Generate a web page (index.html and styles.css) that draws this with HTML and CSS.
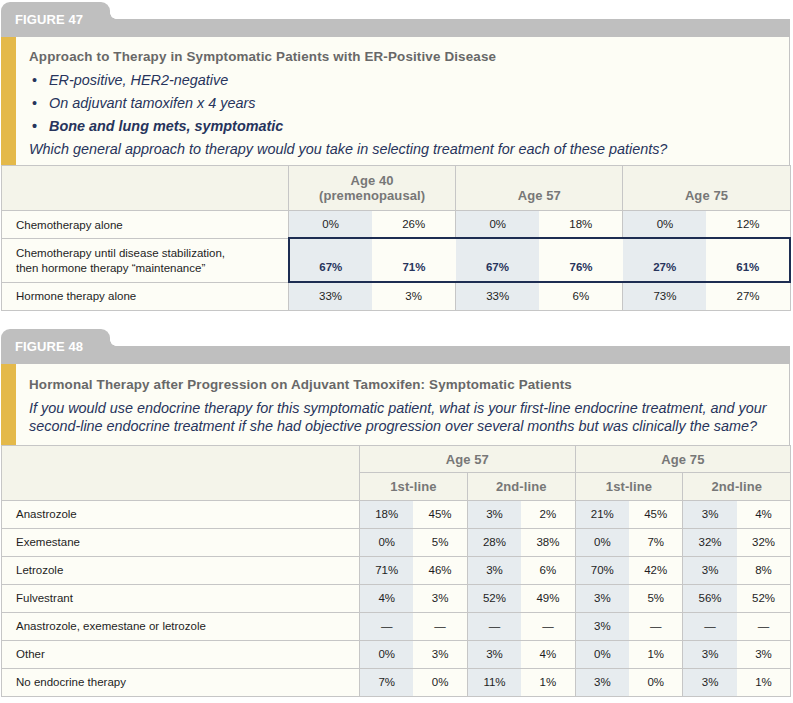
FILE: index.html
```html
<!DOCTYPE html>
<html>
<head>
<meta charset="utf-8">
<link rel="stylesheet" href="styles.css">
</head>
<body>
<div class="page">
  <section class="figure">
    <div class="fig-head"><div class="tab">FIGURE 47</div><div class="bar"></div></div>
    <div class="intro">
      <p class="title">Approach to Therapy in Symptomatic Patients with ER-Positive Disease</p>
      <ul class="bullets">
        <li>ER-positive, HER2-negative</li>
        <li>On adjuvant tamoxifen x 4 years</li>
        <li class="strong">Bone and lung mets, symptomatic</li>
      </ul>
      <p class="question">Which general approach to therapy would you take in selecting treatment for each of these patients?</p>
    </div>
    <table class="data t47">
      <colgroup>
        <col class="c-label47">
        <col class="c-sub47"><col class="c-sub47"><col class="c-sub47"><col class="c-sub47"><col class="c-sub47"><col class="c-sub47">
      </colgroup>
      <thead>
        <tr class="hrow47">
          <th class="label"></th>
          <th colspan="2" class="g">Age 40<br>(premenopausal)</th>
          <th colspan="2" class="g">Age 57</th>
          <th colspan="2" class="g last">Age 75</th>
        </tr>
      </thead>
      <tbody>
        <tr class="r1">
          <td class="label">Chemotherapy alone</td>
          <td class="s g">0%</td><td>26%</td>
          <td class="s g">0%</td><td>18%</td>
          <td class="s g">0%</td><td class="last">12%</td>
        </tr>
        <tr class="tall">
          <td class="label">Chemotherapy until disease stabilization,<br>then hormone therapy “maintenance”</td>
          <td class="s hl hl-first">67%</td><td class="hl">71%</td>
          <td class="s hl">67%</td><td class="hl">76%</td>
          <td class="s hl">27%</td><td class="hl hl-last">61%</td>
        </tr>
        <tr class="r3">
          <td class="label">Hormone therapy alone</td>
          <td class="s g">33%</td><td>3%</td>
          <td class="s g">33%</td><td>6%</td>
          <td class="s g">73%</td><td class="last">27%</td>
        </tr>
      </tbody>
    </table>
  </section>

  <section class="figure second">
    <div class="fig-head"><div class="tab">FIGURE 48</div><div class="bar"></div></div>
    <div class="intro">
      <p class="title">Hormonal Therapy after Progression on Adjuvant Tamoxifen: Symptomatic Patients</p>
      <p class="question">If you would use endocrine therapy for this symptomatic patient, what is your first-line endocrine treatment, and your<br>second-line endocrine treatment if she had objective progression over several months but was clinically the same?</p>
    </div>
    <table class="data t48">
      <colgroup>
        <col class="c-label48">
        <col class="c-sub48"><col class="c-sub48"><col class="c-sub48"><col class="c-sub48"><col class="c-sub48"><col class="c-sub48"><col class="c-sub48"><col class="c-sub48">
      </colgroup>
      <thead>
        <tr class="hrow1">
          <th class="label" rowspan="2"></th>
          <th colspan="4" class="g">Age 57</th>
          <th colspan="4" class="g last">Age 75</th>
        </tr>
        <tr class="hrow2">
          <th colspan="2" class="g">1st-line</th>
          <th colspan="2" class="g">2nd-line</th>
          <th colspan="2" class="g">1st-line</th>
          <th colspan="2" class="g last">2nd-line</th>
        </tr>
      </thead>
      <tbody>
        <tr><td class="label">Anastrozole</td><td class="s g">18%</td><td>45%</td><td class="s g">3%</td><td>2%</td><td class="s g">21%</td><td>45%</td><td class="s g">3%</td><td class="last">4%</td></tr>
        <tr><td class="label">Exemestane</td><td class="s g">0%</td><td>5%</td><td class="s g">28%</td><td>38%</td><td class="s g">0%</td><td>7%</td><td class="s g">32%</td><td class="last">32%</td></tr>
        <tr><td class="label">Letrozole</td><td class="s g">71%</td><td>46%</td><td class="s g">3%</td><td>6%</td><td class="s g">70%</td><td>42%</td><td class="s g">3%</td><td class="last">8%</td></tr>
        <tr><td class="label">Fulvestrant</td><td class="s g">4%</td><td>3%</td><td class="s g">52%</td><td>49%</td><td class="s g">3%</td><td>5%</td><td class="s g">56%</td><td class="last">52%</td></tr>
        <tr><td class="label">Anastrozole, exemestane or letrozole</td><td class="s g">—</td><td>—</td><td class="s g">—</td><td>—</td><td class="s g">3%</td><td>—</td><td class="s g">—</td><td class="last">—</td></tr>
        <tr><td class="label">Other</td><td class="s g">0%</td><td>3%</td><td class="s g">3%</td><td>4%</td><td class="s g">0%</td><td>1%</td><td class="s g">3%</td><td class="last">3%</td></tr>
        <tr><td class="label">No endocrine therapy</td><td class="s g">7%</td><td>0%</td><td class="s g">11%</td><td>1%</td><td class="s g">3%</td><td>0%</td><td class="s g">3%</td><td class="last">1%</td></tr>
      </tbody>
    </table>
  </section>
</div>
</body>
</html>
```

FILE: styles.css
```css
* { box-sizing: border-box; }
html, body { margin: 0; padding: 0; background: #ffffff; }
body { font-family: "Liberation Sans", Arial, sans-serif; color: #222222; }

.page {
  width: 789px;
  margin-left: 1px;
  padding-top: 2px;
}

.figure.second { margin-top: 18px; }

/* header tab + bar */
.fig-head {
  display: flex;
  align-items: flex-start;
}
.tab {
  position: relative;
  width: 109px;
  height: 35px;
  background: #bfbfbf;
  border-radius: 9px 9px 0 0;
  color: #ffffff;
  font-weight: bold;
  font-size: 13px;
  line-height: 16px;
  padding: 10px 0 0 14px;
  letter-spacing: 0.1px;
}
.tab::after {
  content: "";
  position: absolute;
  right: -6px;
  top: 11px;
  width: 6px;
  height: 6px;
  background: radial-gradient(circle at 100% 0, rgba(191,191,191,0) 5.5px, #bfbfbf 6px);
}
.bar {
  flex: 1;
  height: 18px;
  margin-top: 17px;
  background: #bfbfbf;
}

/* intro box */
.intro {
  background: #fdfdf5;
  border-left: 15px solid #e4b94a;
  border-right: 1px solid #c4c4c4;
  padding: 11px 6px 7px 13px;
}
.second .intro { padding-top: 12px; padding-bottom: 10px; }
.intro p, .intro ul { margin: 0; }
.intro .title {
  font-size: 13.4px;
  font-weight: bold;
  color: #686868;
  line-height: 18px;
  letter-spacing: 0.15px;
}
.intro .bullets {
  list-style: none;
  padding: 0;
}
.intro .bullets li, .intro .question {
  margin-top: 5px;
  font-size: 14.4px;
  font-style: italic;
  color: #27345c;
  line-height: 18px;
}
.intro .bullets li {
  display: flex;
  padding-left: 3px;
}
.intro .bullets li::before {
  content: "•";
  width: 17px;
  flex: none;
  font-style: normal;
}
.intro .bullets li.strong { font-weight: bold; }

/* tables */
.data {
  width: 789px;
  border-collapse: collapse;
  table-layout: fixed;
  font-size: 11.5px;
}
.c-label47 { width: 287px; }
.c-sub47 { width: 83.6px; }
.c-label48 { width: 358px; }
.c-sub48 { width: 53.9px; }

.data th, .data td {
  border-top: 1px solid #c6c6c6;
  border-bottom: 1px solid #c6c6c6;
  padding: 6px 2px 6px 2px;
  line-height: 15px;
  text-align: center;
  vertical-align: bottom;
}
.data th {
  background: #f4f4ea;
  color: #777777;
  font-size: 13px;
  font-weight: bold;
  letter-spacing: 0.1px;
}
.data td { background: #fdfdf6; color: #1e1e1e; }
.data td.s { background: #e7ecef; }
.data .label {
  text-align: left;
  padding-left: 14px;
  border-left: 1px solid #c6c6c6;
  border-right: 1px solid #c6c6c6;
}
.data th.label { background: #f4f4ea; }
.data .g { border-left: 1px solid #c6c6c6; }
.data .last { border-right: 1px solid #c6c6c6; }

.hrow47 th { height: 45px; padding-bottom: 7px; }
.t47 tr.r1 td { height: 25px; padding-bottom: 5px; }
.t47 tr.tall td { height: 44px; }
.t47 tr.r3 td { height: 28px; }

.data td.hl {
  border-top: 2px solid #1d2d52;
  border-bottom: 2px solid #1d2d52;
  font-weight: bold;
  color: #27345c;
}
.data td.hl-first { border-left: 2px solid #1d2d52; }
.data td.hl-last { border-right: 2px solid #1d2d52; }

.hrow1 th { height: 25px; padding-bottom: 5px; }
.hrow2 th { height: 28px; padding-bottom: 6px; }
.t48 tbody td { height: 28px; padding-bottom: 6px; }
```
